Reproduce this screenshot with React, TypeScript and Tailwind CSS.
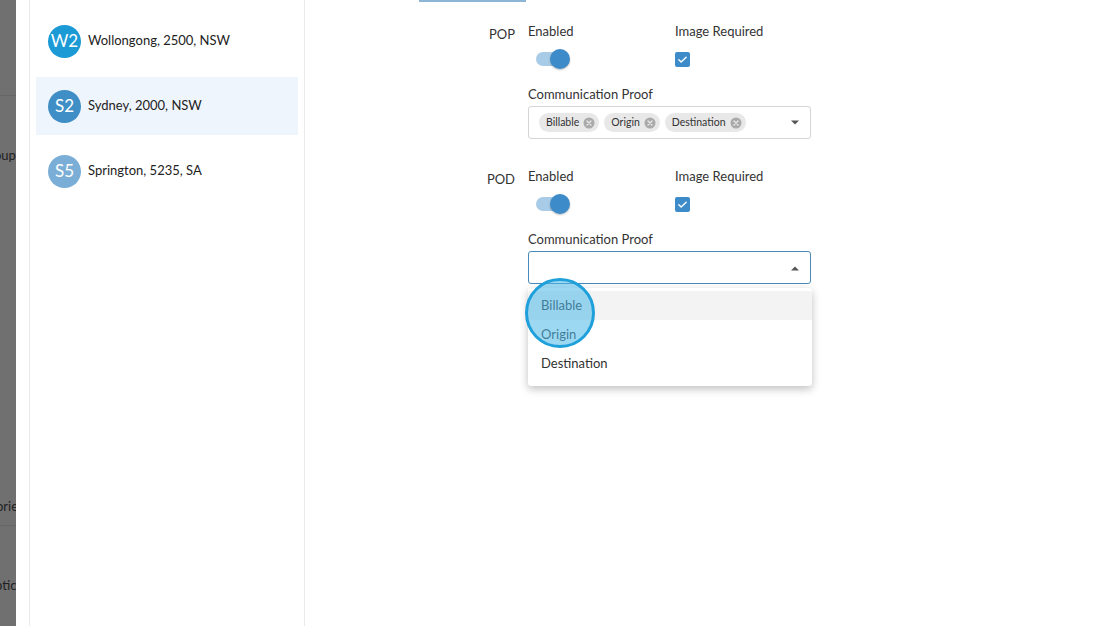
import React from 'react'

const font = { fontFamily: 'Lato, "Open Sans", sans-serif' }

const stops = [
  { code: 'W2', label: 'Wollongong, 2500, NSW', color: 'bg-[#1b9ad6]', active: false },
  { code: 'S2', label: 'Sydney, 2000, NSW', color: 'bg-[#3f8fc6]', active: true },
  { code: 'S5', label: 'Springton, 5235, SA', color: 'bg-[#7aaed6]', active: false },
]

function Toggle() {
  return (
    <div className="relative w-[34px] h-[20px] flex items-center">
      <div className="w-[30px] h-[14px] rounded-full bg-[#a8cbe7]" />
      <div className="absolute right-0 top-0 w-[20px] h-[20px] rounded-full bg-[#3d8bc8] shadow-[0_1px_2px_rgba(0,0,0,0.25)]" />
    </div>
  )
}

function Checkbox() {
  return (
    <div className="w-[15px] h-[15px] rounded-[2px] bg-[#3d8bc8] flex items-center justify-center">
      <svg width="11" height="11" viewBox="0 0 24 24" fill="none" stroke="white" strokeWidth="3" strokeLinecap="round" strokeLinejoin="round">
        <path d="M4 12.5l5 5L20 7" />
      </svg>
    </div>
  )
}

function Chip({ text }: { text: string }) {
  return (
    <div className="flex items-center gap-[4px] h-[19px] pl-[7px] pr-[4px] rounded-full bg-[#e8e8e8] text-[10.5px] text-[#333]">
      <span>{text}</span>
      <svg width="12" height="12" viewBox="0 0 12 12">
        <circle cx="6" cy="6" r="5.5" fill="#aaaaaa" />
        <path d="M4 4l4 4M8 4l-4 4" stroke="#e8e8e8" strokeWidth="1.3" strokeLinecap="round" />
      </svg>
    </div>
  )
}

function Settings({ label, focused, chips }: { label: string; focused?: boolean; chips?: string[] }) {
  return (
    <div className="flex">
      <div className="w-[39px] pt-[3px] text-[13px] text-[#333] text-right pr-[13px] box-content -ml-[13px]">{label}</div>
      <div className="flex flex-col">
        <div className="flex">
          <div className="w-[147px] flex flex-col">
            <div className="text-[13px] text-[#333] leading-[18px]">Enabled</div>
            <div className="pl-[8px] mt-[9px]">
              <Toggle />
            </div>
          </div>
          <div className="flex flex-col">
            <div className="text-[13px] text-[#333] leading-[18px]">Image Required</div>
            <div className="mt-[12px]">
              <Checkbox />
            </div>
          </div>
        </div>
        <div className="text-[13px] text-[#333] leading-[18px] mt-[16px]">Communication Proof</div>
        <div
          className={
            'mt-[3px] w-[283px] h-[33px] rounded-[3px] flex items-center pl-[10px] pr-[10px] bg-white ' +
            (focused ? 'border border-[#4a89b8]' : 'border border-[#d4d4d4]')
          }
        >
          <div className="flex gap-[5px] flex-1">
            {chips?.map((c) => <Chip key={c} text={c} />)}
          </div>
          <svg width="10" height="6" viewBox="0 0 10 6">
            {focused ? <path d="M1 5.5L5 1.5L9 5.5Z" fill="#555" /> : <path d="M1 0.5L5 4.5L9 0.5Z" fill="#555" />}
          </svg>
        </div>
      </div>
    </div>
  )
}

export default function App() {
  return (
    <div className="w-[1120px] h-[626px] flex bg-white overflow-hidden" style={font}>
      {/* dimmed page behind the drawer */}
      <div className="relative w-[16px] h-full bg-[#707070] overflow-hidden shrink-0">
        <div className="absolute left-0 top-[95px] w-full h-px bg-[#666]" />
        <div className="absolute -left-[6px] top-[146px] text-[13px] text-[#1f1f1f] whitespace-nowrap">oup</div>
        <div className="absolute -left-[4px] top-[497px] text-[13px] text-[#1f1f1f] whitespace-nowrap">orie</div>
        <div className="absolute left-0 top-[525px] w-full h-px bg-[#666]" />
        <div className="absolute -left-[5px] top-[576px] text-[13px] text-[#1f1f1f] whitespace-nowrap">ptic</div>
      </div>

      <div className="w-[13px] h-full bg-white" />

      {/* stop list */}
      <div className="w-[276px] h-full border-l border-r border-[#ebebeb] px-[6px] pt-[12px] shrink-0">
        {stops.map((s) => (
          <div
            key={s.code}
            className={'h-[58px] flex items-center gap-[7px] pl-[12px] mb-[7px] ' + (s.active ? 'bg-[#eff5fc]' : '')}
          >
            <div className={'w-[33px] h-[33px] rounded-full flex items-center justify-center text-white text-[17px] ' + s.color}>
              {s.code}
            </div>
            <div className="text-[13px] text-[#222]">{s.label}</div>
          </div>
        ))}
      </div>

      {/* detail */}
      <div className="relative flex-1 h-full">
        <div className="absolute left-[114px] top-0 w-[107px] h-[2px] bg-[#8cb5d6]" />
        <div className="pl-[184px] pt-[22px] flex flex-col gap-[28px]">
          <Settings label="POP" chips={['Billable', 'Origin', 'Destination']} />
          <div className="relative">
            <Settings label="POD" focused />
            <div className="absolute left-[39px] top-[121px] w-[284px] bg-white rounded-[3px] shadow-[0_3px_8px_rgba(0,0,0,0.25)] py-[3px]">
              <div className="h-[29px] flex items-center pl-[13px] text-[13px] text-[#333] bg-[#f3f3f3]">Billable</div>
              <div className="h-[29px] flex items-center pl-[13px] text-[13px] text-[#333]">Origin</div>
              <div className="h-[29px] flex items-center pl-[13px] text-[13px] text-[#333]">Destination</div>
              <div className="h-[5px]" />
            </div>
            <div className="absolute left-[36px] top-[111px] w-[70px] h-[70px] rounded-full bg-[#4db8ea]/55 border-[3px] border-[#1fa0da]" />
          </div>
        </div>
      </div>
    </div>
  )
}
